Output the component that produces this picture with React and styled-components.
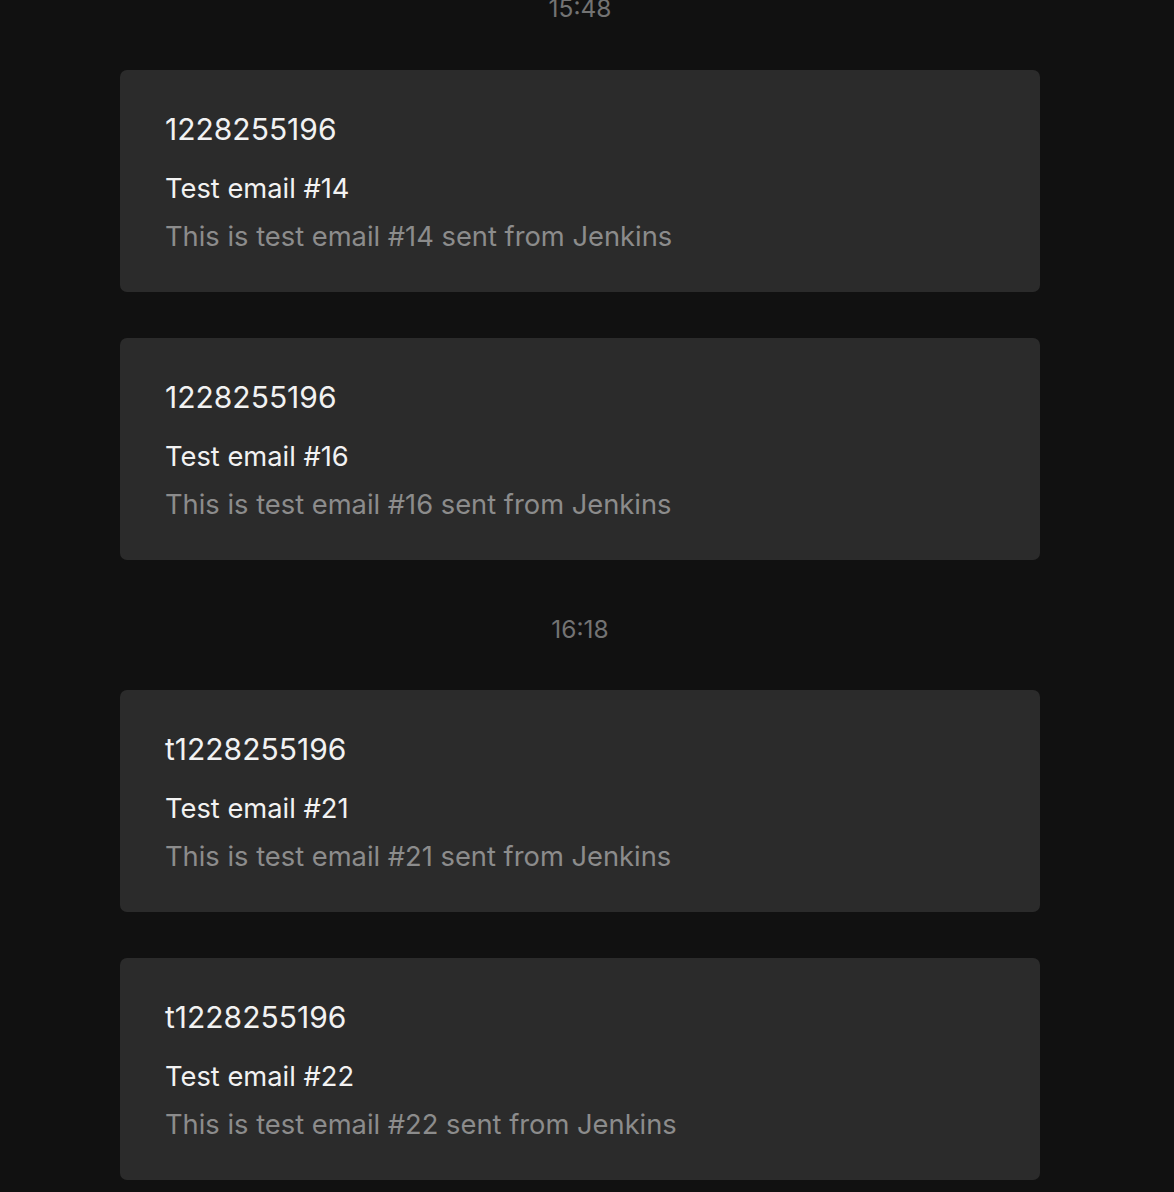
import React from "react";
import styled, { createGlobalStyle } from "styled-components";

const GlobalStyle = createGlobalStyle`
  html, body {
    margin: 0;
    padding: 0;
    background: #111111;
    overflow: hidden;
  }
  body {
    font-family: Inter, "Noto Sans", sans-serif;
    -webkit-font-smoothing: antialiased;
  }
`;

const Page = styled.div`
  width: 920px;
  margin: 0 0 0 120px;
  display: flex;
  flex-direction: column;
`;

const Group = styled.section`
  display: flex;
  flex-direction: column;
  gap: 46px;
`;

const Time = styled.div`
  text-align: center;
  color: #737373;
  font-size: 24.5px;
  line-height: 40px;
  margin: ${(p) => (p.first ? "-12px 0 -4px" : "49px 0 -5px")};
`;

const Card = styled.div`
  background: #2b2b2b;
  border-radius: 7px;
  padding: 41px 45px 0;
  height: 222px;
  box-sizing: border-box;
`;

const Sender = styled.div`
  color: #f2f2f2;
  font-size: 30px;
  line-height: 36px;
`;

const Subject = styled.div`
  color: #f2f2f2;
  font-size: 27.3px;
  line-height: 36px;
  margin-top: 24px;
`;

const Body = styled.div`
  color: #8c8c8c;
  font-size: 27.3px;
  line-height: 36px;
  margin-top: 12px;
`;

const groups = [
  {
    time: "15:48",
    mails: [
      { from: "1228255196", n: 14 },
      { from: "1228255196", n: 16 },
    ],
  },
  {
    time: "16:18",
    mails: [
      { from: "t1228255196", n: 21 },
      { from: "t1228255196", n: 22 },
    ],
  },
];

export default function App() {
  return (
    <>
      <GlobalStyle />
      <Page>
        {groups.map((g, i) => (
          <Group key={g.time}>
            <Time first={i === 0}>{g.time}</Time>
            {g.mails.map((m) => (
              <Card key={m.n}>
                <Sender>{m.from}</Sender>
                <Subject>Test email #{m.n}</Subject>
                <Body>This is test email #{m.n} sent from Jenkins</Body>
              </Card>
            ))}
          </Group>
        ))}
      </Page>
    </>
  );
}
